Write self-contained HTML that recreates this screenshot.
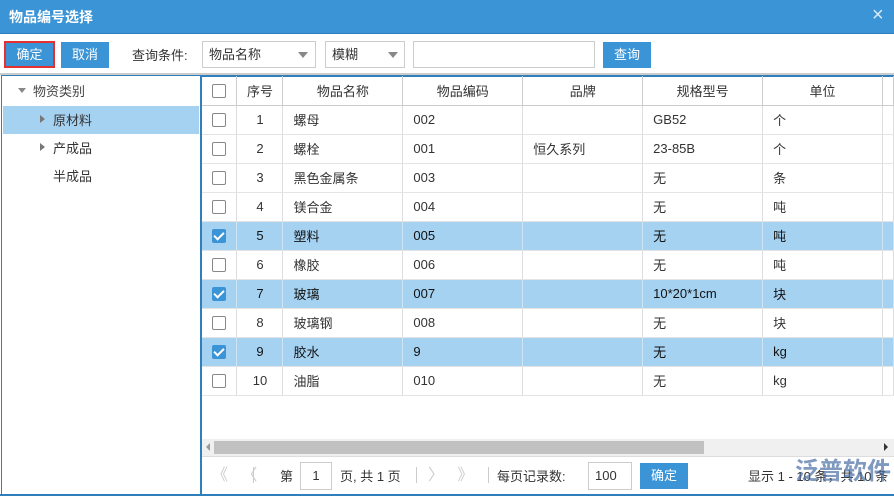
<!DOCTYPE html><html><head><meta charset="utf-8"><style>
*{margin:0;padding:0;box-sizing:border-box}
body{width:894px;height:499px;overflow:hidden;background:#fff;font-family:"Liberation Sans","Noto Sans CJK SC",sans-serif;font-size:13px;color:#333;position:relative}
.a{position:absolute}
.btn{position:absolute;background:#3a94d6;color:#fff;text-align:center;font-size:13px}
.sel{position:absolute;border:1px solid #ccc;background:#fff;height:27px;line-height:25px;padding-left:6px}
.tri{position:absolute;width:0;height:0;border-left:5px solid transparent;border-right:5px solid transparent;border-top:6px solid #888}
table{border-collapse:collapse;position:absolute;left:202px;top:76px;table-layout:fixed}
td{height:29px;border-right:1px solid #ddd;border-bottom:1px solid #e4e4e4;padding-left:10px;white-space:nowrap}
tr.h td{text-align:center;padding:0;border-right:1px solid #ccc;border-bottom:1px solid #ccc;height:29px}
td.c{text-align:center;padding:0}
tr.s td{background:#a6d2f2;color:#111;border-right-color:#cde4f5}
.cb{display:inline-block;width:14px;height:14px;border:1px solid #888;border-radius:2px;vertical-align:middle;background:#fff}
.ck{display:inline-block;width:14px;height:14px;border-radius:2px;background:#3a94d6;vertical-align:middle;position:relative}
.ck:after{content:"";position:absolute;left:4px;top:1px;width:4px;height:8px;border:solid #fff;border-width:0 2px 2px 0;transform:rotate(45deg)}
</style></head><body>
<div class="a" style="left:0;top:0;width:894px;height:34px;background:#3a94d6;border-bottom:1px solid #2f7fbd"></div>
<div class="a" style="left:9px;top:7px;color:#fff;font-weight:bold;font-size:14px">物品编号选择</div>
<div class="a" style="left:872px;top:4px;color:#d8ebf8;font-size:20px">×</div>
<div class="btn" style="left:4px;top:41px;width:51px;height:27px;line-height:23px;border:2px solid #e53030">确定</div>
<div class="btn" style="left:61px;top:42px;width:48px;height:26px;line-height:26px">取消</div>
<div class="a" style="left:132px;top:45px">查询条件:</div>
<div class="sel" style="left:202px;top:41px;width:114px">物品名称</div><div class="tri" style="left:298px;top:52px"></div>
<div class="sel" style="left:325px;top:41px;width:80px">模糊</div><div class="tri" style="left:388px;top:52px"></div>
<div class="sel" style="left:413px;top:41px;width:182px"></div>
<div class="btn" style="left:603px;top:42px;width:48px;height:26px;line-height:26px">查询</div>
<div class="a" style="left:0;top:73px;width:894px;height:2px;background:#ccc"></div>
<div class="a" style="left:1px;top:75px;width:201px;height:420px;border:1px solid #2f7fbd;border-right:2px solid #2f7fbd"></div>
<div class="a" style="left:200px;top:75px;width:694px;height:2px;background:#2f7fbd"></div>
<div class="a" style="left:0;top:494px;width:894px;height:2px;background:#2f7fbd"></div>
<div class="tri" style="left:18px;top:88px;border-width:5px 4px 0 4px"></div>
<div class="a" style="left:33px;top:81px;color:#444">物资类别</div>
<div class="a" style="left:3px;top:106px;width:196px;height:28px;background:#a6d2f2"></div>
<div class="a" style="left:40px;top:115px;border-top:4px solid transparent;border-bottom:4px solid transparent;border-left:5px solid #777"></div>
<div class="a" style="left:53px;top:110px">原材料</div>
<div class="a" style="left:40px;top:143px;border-top:4px solid transparent;border-bottom:4px solid transparent;border-left:5px solid #777"></div>
<div class="a" style="left:53px;top:138px">产成品</div>
<div class="a" style="left:53px;top:166px">半成品</div>
<table>
<colgroup><col style="width:35px"><col style="width:46px"><col style="width:120px"><col style="width:120px"><col style="width:120px"><col style="width:120px"><col style="width:120px"><col style="width:11px"></colgroup>
<tr class="h"><td><span class="cb"></span></td><td>序号</td><td>物品名称</td><td>物品编码</td><td>品牌</td><td>规格型号</td><td>单位</td><td></td></tr>
<tr><td class="c"><span class="cb"></span></td><td class="c">1</td><td>螺母</td><td>002</td><td></td><td>GB52</td><td>个</td><td></td></tr>
<tr><td class="c"><span class="cb"></span></td><td class="c">2</td><td>螺栓</td><td>001</td><td>恒久系列</td><td>23-85B</td><td>个</td><td></td></tr>
<tr><td class="c"><span class="cb"></span></td><td class="c">3</td><td>黑色金属条</td><td>003</td><td></td><td>无</td><td>条</td><td></td></tr>
<tr><td class="c"><span class="cb"></span></td><td class="c">4</td><td>镁合金</td><td>004</td><td></td><td>无</td><td>吨</td><td></td></tr>
<tr class="s"><td class="c"><span class="ck"></span></td><td class="c">5</td><td>塑料</td><td>005</td><td></td><td>无</td><td>吨</td><td></td></tr>
<tr><td class="c"><span class="cb"></span></td><td class="c">6</td><td>橡胶</td><td>006</td><td></td><td>无</td><td>吨</td><td></td></tr>
<tr class="s"><td class="c"><span class="ck"></span></td><td class="c">7</td><td>玻璃</td><td>007</td><td></td><td>10*20*1cm</td><td>块</td><td></td></tr>
<tr><td class="c"><span class="cb"></span></td><td class="c">8</td><td>玻璃钢</td><td>008</td><td></td><td>无</td><td>块</td><td></td></tr>
<tr class="s"><td class="c"><span class="ck"></span></td><td class="c">9</td><td>胶水</td><td>9</td><td></td><td>无</td><td>kg</td><td></td></tr>
<tr><td class="c"><span class="cb"></span></td><td class="c">10</td><td>油脂</td><td>010</td><td></td><td>无</td><td>kg</td><td></td></tr>
</table>
<div class="a" style="left:202px;top:439px;width:692px;height:17px;background:#f0f0f0"></div>
<div class="a" style="left:214px;top:441px;width:490px;height:13px;background:#c1c1c1"></div>
<div class="a" style="left:206px;top:443px;border-top:4px solid transparent;border-bottom:4px solid transparent;border-right:4px solid #999"></div>
<div class="a" style="left:884px;top:443px;border-top:4px solid transparent;border-bottom:4px solid transparent;border-left:4px solid #333"></div>
<div class="a" style="left:202px;top:456px;width:692px;height:1px;background:#ddd"></div>
<div class="a" style="left:212px;top:461px;color:#ccc;font-size:16px">《&nbsp;&nbsp;&nbsp;〈</div>
<div class="a" style="left:253px;top:467px;width:1px;height:16px;background:#ccc"></div>
<div class="a" style="left:280px;top:466px">第</div>
<div class="a" style="left:300px;top:462px;width:32px;height:28px;border:1px solid #ccc;text-align:center;line-height:26px">1</div>
<div class="a" style="left:340px;top:466px">页, 共 1 页</div>
<div class="a" style="left:416px;top:467px;width:1px;height:16px;background:#ccc"></div>
<div class="a" style="left:428px;top:461px;color:#ccc;font-size:16px">〉&nbsp;&nbsp;&nbsp;》</div>
<div class="a" style="left:488px;top:467px;width:1px;height:16px;background:#ccc"></div>
<div class="a" style="left:497px;top:466px">每页记录数:</div>
<div class="a" style="left:588px;top:462px;width:44px;height:28px;border:1px solid #ccc;line-height:26px;padding-left:6px">100</div>
<div class="btn" style="left:640px;top:463px;width:48px;height:26px;line-height:26px">确定</div>
<div class="a" style="left:748px;top:466px">显示 1 - 10 条，共 10 条</div>
<div class="a" style="left:795px;top:451px;color:#4a6fa5;font-size:24px;opacity:.7;font-weight:bold">泛普软件</div>
</body></html>
